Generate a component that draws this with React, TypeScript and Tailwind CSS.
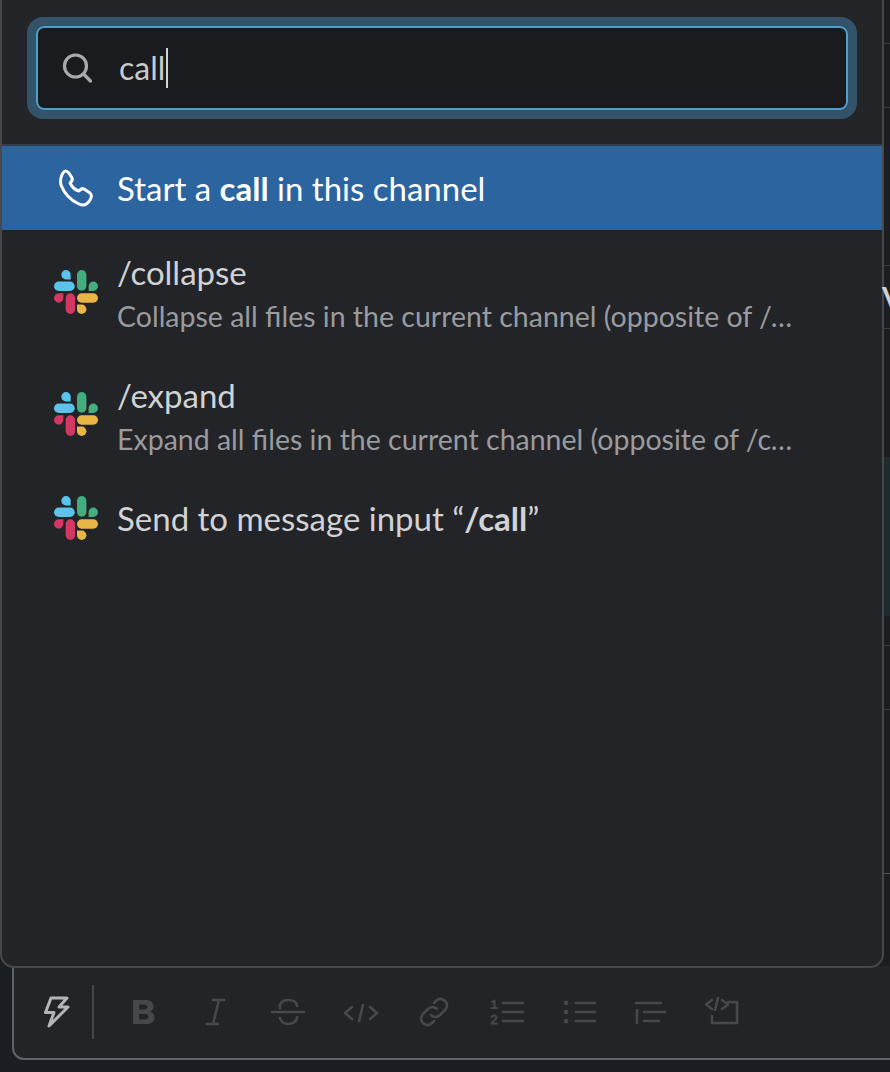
function SlackLogo({ shift }: { shift?: boolean }) {
  return (
    <svg width="45" height="45" viewBox="0 0 45 45" className={`shrink-0 ${shift ? "mt-[2px]" : ""}`}>
      <path d="M13 0a4.7 4.7 0 0 0 0 9.4h4.7V4.7A4.7 4.7 0 0 0 13 0z" fill="#5ac4ea" />
      <rect x="1" y="11.6" width="20.7" height="9.4" rx="4.7" fill="#5ac4ea" />
      <rect x="24" y="0" width="9.4" height="20.7" rx="4.7" fill="#42ad7f" />
      <path d="M45 16.3a4.7 4.7 0 0 0-9.4 0V21h4.7a4.7 4.7 0 0 0 4.7-4.7z" fill="#42ad7f" />
      <path d="M1 28a4.7 4.7 0 0 0 9.4 0v-4.7H5.7A4.7 4.7 0 0 0 1 28z" fill="#d33763" />
      <rect x="12.7" y="23.3" width="9.4" height="20.7" rx="4.7" fill="#d33763" />
      <rect x="24" y="23.3" width="21" height="9.4" rx="4.7" fill="#e9b544" />
      <path d="M28.7 44a4.7 4.7 0 0 0 0-9.4H24v4.7a4.7 4.7 0 0 0 4.7 4.7z" fill="#e9b544" />
    </svg>
  );
}

function Tool({ children }: { children: React.ReactNode }) {
  return (
    <div className="flex h-[54px] w-[72px] items-center justify-center text-[#47484c]">
      <svg width="36" height="36" viewBox="0 0 36 36" fill="none" stroke="currentColor" strokeWidth="2.600" strokeLinecap="round" strokeLinejoin="round" className="overflow-visible">
        {children}
      </svg>
    </div>
  );
}

function Row({ title, sub, lower }: { title: React.ReactNode; sub?: string; lower?: boolean }) {
  return (
    <div className={`flex items-center gap-[19px] pl-[51px] pr-[86px] ${sub ? "h-[122px]" : "h-[88px]"}`}>
      <SlackLogo shift={!!sub} />
      <div className={`min-w-0 flex-1 ${lower ? "pt-[3px]" : ""}`}>
        <div className={`text-[33px] leading-[38px] text-[#d1d2d3] ${sub ? "mt-[5px]" : ""}`}>{title}</div>
        {sub && <div className="mt-[6px] truncate text-[28.500px] leading-[38px] text-[#9a9b9e]">{sub}</div>}
      </div>
    </div>
  );
}

export default function App() {
  return (
    <div className="relative h-[1072px] w-[890px] overflow-hidden bg-[#1a1d21] font-['Lato',sans-serif]">
      <div className="h-[966px] bg-[#1c1d21]" />
      <div className="ml-[12px] flex h-[94px] w-[900px] items-center rounded-b-[12px] border-x-2 border-b-2 border-[#626367] bg-[#222428]">
        <div className="flex h-[54px] w-[80px] items-center border-r-2 border-[#45464a] pl-[25px]">
          <svg width="36" height="42" viewBox="0 0 36 42" fill="none" stroke="#b4b5b8" strokeWidth="3" strokeLinejoin="round">
            <path d="M28 7H12L6.500 21.500H15L10 35 29 16H20z" />
          </svg>
        </div>
        <div className="ml-[14px] flex">
          <Tool>
            <path
              fillRule="evenodd"
              fill="currentColor"
              stroke="none"
              d="M7 6h12c5.500 0 8.500 2.500 8.500 6.500 0 2.500-1.500 4.500-3.500 5.300 2.800.7 4.500 3 4.500 5.700 0 4.200-3.300 6.500-8.500 6.500H7zM13 10.500v5h5.500c2 0 3-1 3-2.500s-1-2.500-3-2.500zM13 20v5.500h6c2.200 0 3.300-1 3.300-2.800S21.200 20 19 20z"
            />
          </Tool>
          <Tool>
            <path d="M15 6h11M9 30h11M21 6l-6 24" />
          </Tool>
          <Tool>
            <path d="M2 18h32M10 14C9 9 13 6 18 6s9 2 9 6M10 24c1 4 4 6 8 6s9-2 9-7" />
          </Tool>
          <Tool>
            <path d="M10 13l-7 6 7 6M28 13l7 6-7 6M21 11l-4 16" />
          </Tool>
          <Tool>
            <g transform="translate(2 0)">
              <path d="M15 21c3 3 6.500 2.500 9 0l5-5c2.500-3 2.500-6.500 0-9-3-2.500-6.500-2.500-9 0l-2 2M21 15c-3-3-6.500-2.500-9 0l-5 5c-2.500 3-2.500 6.500 0 9 3 2.500 6.500 2.500 9 0l2-2" />
            </g>
          </Tool>
          <Tool>
            <path d="M17 9h20M17 18h20M17 27h20" />
            <path d="M6 8l2.500-1.500V14M5.500 14H11M5.500 23c1-2 5-2 5 .5 0 2-4 3-5 6H11" strokeWidth="2" />
          </Tool>
          <Tool>
            <path d="M18 9h19M18 18h19M18 27h19" />
            <path d="M8 9h.1M8 18h.1M8 27h.1" strokeWidth="4.500" />
          </Tool>
          <Tool>
            <path d="M6 9h25M14 18h21M14 27h15M7 16v13" />
          </Tool>
          <Tool>
            <path d="M26 8h9v21H10v-7" />
            <path d="M10 6l-6 4.500 6 4.500M20 6l6 4.500-6 4.500M16 4l-3 12" />
          </Tool>
        </div>
      </div>

      <div className="absolute left-[883px] top-[43px] h-[1px] w-[7px] bg-[#3a3b3f]" />
      <div className="absolute left-[883px] top-[107px] h-[1px] w-[7px] bg-[#3a3b3f]" />
      <div className="absolute left-[883px] top-[265px] h-[1px] w-[7px] bg-[#3a3b3f]" />
      <div className="absolute left-[883px] top-[328px] h-[1px] w-[7px] bg-[#3a3b3f]" />
      <div className="absolute left-[884px] top-[457px] h-[159px] w-[6px] bg-[#1f2a2e]" />
      <div className="absolute left-[884px] top-[645px] h-[1px] w-[6px] bg-[#3a3b3f]" />
      <div className="absolute left-[884px] top-[709px] h-[1px] w-[6px] bg-[#3a3b3f]" />
      <div className="absolute left-[884px] top-[873px] h-[1px] w-[6px] bg-[#55565a]" />

      <div className="absolute left-0 top-[-20px] h-[988px] w-[884px] overflow-hidden rounded-b-[14px] border-2 border-[#47484c] bg-[#222428]">
        <div className="mx-[25px] mt-[35px] h-[102px] rounded-[16px] border-[9px] border-[#33536a]">
          <div className="flex h-[84px] items-center rounded-[8px] border-2 border-[#4f9fcd] bg-[#1a1b1e] pl-[24px]">
            <svg width="30" height="30" viewBox="0 0 30 30" fill="none" stroke="#a9aaac" strokeWidth="3.200" strokeLinecap="round" className="shrink-0">
              <circle cx="13.500" cy="13" r="11" />
              <path d="M21.500 21l7 7" />
            </svg>
            <span className="ml-[27px] text-[32px] leading-[38px] text-[#c9cacb]">call</span>
            <span className="ml-[1px] h-[40px] w-[2px] bg-[#d1d2d3]" />
          </div>
        </div>
        <div className="mt-[25px] h-[2px] bg-[#3b3c40]" />
        <div className="flex h-[84px] items-center gap-[17px] bg-[#2c649f] pl-[52px] text-white">
          <svg width="46" height="46" viewBox="0 0 46 46" fill="none" stroke="currentColor" strokeWidth="3" strokeLinejoin="round" className="shrink-0">
            <path d="M9 8C11 5 13 6 15 8L18 13C19 15 18 16 16 18C18 22 21 25 25 26C27 24 28 23 30 24L36 28C38 30 38 32 36 35C33 40 29 41 25 39C16 35 10 28 7 20C6 15 7 11 9 8Z" />
          </svg>
          <span className="text-[33px] leading-[38px]">
            Start a <b>call</b> in this channel
          </span>
        </div>
        <Row title="/collapse" sub="Collapse all files in the current channel (opposite of /expand)" />
        <Row title="/expand" sub="Expand all files in the current channel (opposite of /collapse)" lower />
        <Row title={<>Send to message input “<b>/call</b>”</>} />
      </div>
      <span className="absolute left-[882px] top-[278px] text-[29px] font-bold leading-[38px] text-[#d1d2d3]">V</span>
    </div>
  );
}
